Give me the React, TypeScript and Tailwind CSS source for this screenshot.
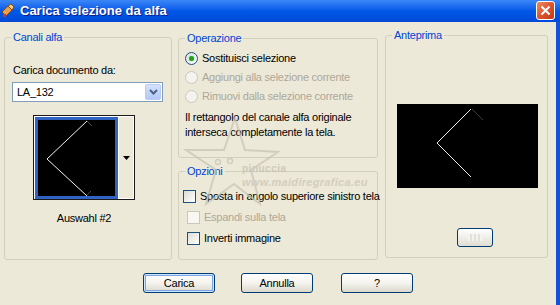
import { clsx as cn } from 'clsx'

const font = "font-['Liberation_Sans',Arial,sans-serif]"

function Radio({ checked, disabled, label }: { checked?: boolean; disabled?: boolean; label: string }) {
  return (
    <div className="flex h-[15px] items-center gap-[4px] whitespace-nowrap">
      <span
        className={cn(
          "flex h-[13px] w-[13px] shrink-0 items-center justify-center rounded-full border",
          disabled ? "border-[#CAC8BB] bg-[#F4F3EE]" : "border-[#1C5180] bg-gradient-to-br from-[#DCDCD7] to-white"
        )}
      >
        {checked && <span className="h-[5px] w-[5px] rounded-full bg-[#21A121] shadow-[0_0_1px_#5fd35f]" />}
      </span>
      <span className={disabled ? "text-[#ACA899]" : "text-black"}>{label}</span>
    </div>
  )
}

function Check({ disabled, label, className }: { disabled?: boolean; label: string; className?: string }) {
  return (
    <div className={cn("flex h-[15px] items-center gap-[4px] whitespace-nowrap", className)}>
      <span
        className={cn(
          "h-[13px] w-[13px] shrink-0 border",
          disabled ? "border-[#CAC8BB] bg-[#F8F7F2]" : "border-[#1C5180] bg-gradient-to-br from-[#DCDCD7] to-white"
        )}
      />
      <span className={disabled ? "text-[#ACA899]" : "text-black"}>{label}</span>
    </div>
  )
}

function Group({ title, className, children }: { title: string; className?: string; children?: React.ReactNode }) {
  return (
    <fieldset className={cn("flex min-w-0 flex-col rounded-[3px] border border-[#D0D0BF]", className)}>
      <legend className="ml-[6px] px-[2px] leading-[15px] text-[#0046D5]">{title}</legend>
      {children}
    </fieldset>
  )
}

function XpButton({ label, isDefault, className }: { label: string; isDefault?: boolean; className?: string }) {
  return (
    <button
      className={cn(
        "flex h-[20px] w-[72px] items-center justify-center rounded-[3px] border border-[#003C74] bg-gradient-to-b from-white via-[#F4F3EE] to-[#DCD8CC] text-black",
        isDefault && "shadow-[inset_0_0_0_1px_#CEE7FF,inset_0_0_0_2px_#7BA4E7]",
        className
      )}
    >
      {label}
    </button>
  )
}

export default function App() {
  return (
    <div className={cn("relative flex h-[305px] w-[560px] flex-col overflow-hidden bg-[#ECE9D8] text-[11px] leading-[15px] tracking-[-0.25px] text-black", font)}>
      {/* Title bar */}
      <div className="flex h-[22px] shrink-0 items-start bg-gradient-to-b from-[#3B86F7] via-[#0058E8] to-[#0049D6]">
        <svg width="16" height="16" viewBox="0 0 16 16" className="ml-[1px] mt-[3px]">
          <path d="M1 9 L7 3 L11 7 L5 13 Z" fill="#E8A04A" stroke="#8A4A12" strokeWidth="1" />
          <path d="M7 3 L10 1 L13 4 L11 7 Z" fill="#F6D27A" stroke="#8A4A12" strokeWidth="1" />
          <rect x="2" y="11" width="3" height="3" fill="#C0392B" />
        </svg>
        <span className="ml-[3px] mt-[3px] text-[13px] font-bold leading-[16px] tracking-normal text-white [text-shadow:1px_1px_0_#0A1E8C]">
          Carica selezione da alfa
        </span>
        <div className="ml-auto mr-[5px] mt-[1px] flex h-[19px] w-[19px] items-center justify-center rounded-[3px] border border-white bg-gradient-to-br from-[#EE8A66] via-[#DD5430] to-[#C13A12]">
          <svg width="11" height="11" viewBox="0 0 11 11">
            <path d="M1.5 1.5 L9.5 9.5 M9.5 1.5 L1.5 9.5" stroke="white" strokeWidth="2" />
          </svg>
        </div>
      </div>

      {/* Body */}
      <div className="flex flex-1 flex-col border-r-[4px] border-[#1550D8] pl-[4px] pt-[6px]">
        <div className="flex h-[232px] items-start">
          {/* Canali alfa */}
          <Group title="Canali alfa" className="mt-[2px] h-[230px] w-[168px]">
            <div className="ml-[8px] mt-[18px]">Carica documento da:</div>
            <div className="ml-[7px] mt-[4px] flex h-[20px] w-[151px] items-center border border-[#7F9DB9] bg-white">
              <span className="ml-[4px] flex-1">LA_132</span>
              <span className="mr-[1px] flex h-[16px] w-[16px] items-center justify-center rounded-[2px] border border-[#B9CCF5] bg-gradient-to-b from-[#D5E2FD] to-[#B3C8F5]">
                <svg width="9" height="6" viewBox="0 0 9 6">
                  <path d="M1 1 L4.5 4.5 L8 1" stroke="#4D6185" strokeWidth="2" fill="none" />
                </svg>
              </span>
            </div>
            <div className="ml-[28px] mt-[13px] flex h-[85px] w-[102px] border border-[#1A1A1A] bg-white p-[1px]">
              <div className="h-[82px] w-[83px] border-[3px] border-[#3163C2] bg-black">
                <svg width="77" height="76" viewBox="0 0 77 76">
                  <polyline points="49,1 9,39 49,76" stroke="#F2F2F2" strokeWidth="1" fill="none" />
                  <line x1="49" y1="1" x2="54" y2="6" stroke="#4A4A4A" strokeWidth="1" />
                  <line x1="49" y1="75" x2="53" y2="71" stroke="#4A4A4A" strokeWidth="1" />
                </svg>
              </div>
              <div className="flex flex-1 items-center justify-center border-l border-white bg-[#ECE9D8]">
                <svg width="7" height="4" viewBox="0 0 7 4">
                  <path d="M0 0 L7 0 L3.5 4 Z" fill="black" />
                </svg>
              </div>
            </div>
            <div className="ml-[28px] mt-[11px] w-[102px] text-center">Auswahl #2</div>
          </Group>

          {/* Middle column */}
          <div className="ml-[6px] flex w-[200px] flex-col">
            <Group title="Operazione" className="mt-[3px] h-[127px]">
              <div className="ml-[6px] mt-[5px] flex flex-col gap-[4px]">
                <Radio checked label="Sostituisci selezione" />
                <Radio disabled label="Aggiungi alla selezione corrente" />
                <Radio disabled label="Rimuovi dalla selezione corrente" />
              </div>
              <p className="ml-[6px] mt-[6px] whitespace-nowrap">
                Il rettangolo del canale alfa originale
                <br />
                interseca completamente la tela.
              </p>
            </Group>
            <Group title="Opzioni" className="mt-[6px] h-[96px]">
              <div className="mt-[10px] flex flex-col gap-[6px]">
                <Check label="Sposta in angolo superiore sinistro tela" className="ml-[4px]" />
                <Check disabled label="Espandi sulla tela" className="ml-[8px]" />
                <Check label="Inverti immagine" className="ml-[8px]" />
              </div>
            </Group>
          </div>

          {/* Anteprima */}
          <Group title="Anteprima" className="ml-[7px] h-[230px] w-[163px]">
            <div className="ml-[11px] mt-[61px] h-[84px] w-[141px] bg-black">
              <svg width="141" height="84" viewBox="0 0 141 84">
                <polyline points="74,5 40,39 74,73" stroke="#EDEDED" strokeWidth="1" fill="none" />
                <line x1="75" y1="5" x2="86" y2="16" stroke="#3A3A3A" strokeWidth="1" />
              </svg>
            </div>
            <div className="ml-[71px] mt-[40px] flex h-[19px] w-[36px] items-center justify-center rounded-[3px] border border-[#003C74] bg-gradient-to-b from-white to-[#E0DDD2]">
              <span className="h-[7px] w-[14px] bg-[repeating-linear-gradient(90deg,#F4F3EE_0_2px,#E2E0D8_2px_4px)]" />
            </div>
          </Group>
        </div>

        {/* Buttons */}
        <div className="mt-[13px] flex pl-[139px]">
          <XpButton label="Carica" isDefault />
          <XpButton label="Annulla" className="ml-[26px]" />
          <XpButton label="?" className="ml-[28px]" />
        </div>
      </div>

      {/* Watermark */}
      <div className="pointer-events-none absolute left-[180px] top-[112px] h-[100px] w-[190px] opacity-70">
        <svg width="100" height="100" viewBox="0 0 100 100" className="absolute left-0 top-0">
          <polygon
            points="55,6 65,38 98,40 71,58 80,92 54,72 26,92 36,58 6,38 44,38"
            fill="none"
            stroke="#C8C4B4"
            strokeWidth="2"
          />
          <circle cx="38" cy="50" r="2.5" fill="none" stroke="#C8C4B4" strokeWidth="1.5" />
          <circle cx="50" cy="49" r="2.5" fill="none" stroke="#C8C4B4" strokeWidth="1.5" />
        </svg>
        <span className="absolute left-[62px] top-[51px] text-[10px] font-bold leading-[12px] tracking-[0.5px] text-[#C2BEAE]">
          pinuccia
        </span>
        <span className="absolute left-[62px] top-[64px] text-[11px] font-bold italic leading-[12px] tracking-[0.3px] text-[#C8C4B4]">
          www.maidiregrafica.eu
        </span>
      </div>
    </div>
  )
}
